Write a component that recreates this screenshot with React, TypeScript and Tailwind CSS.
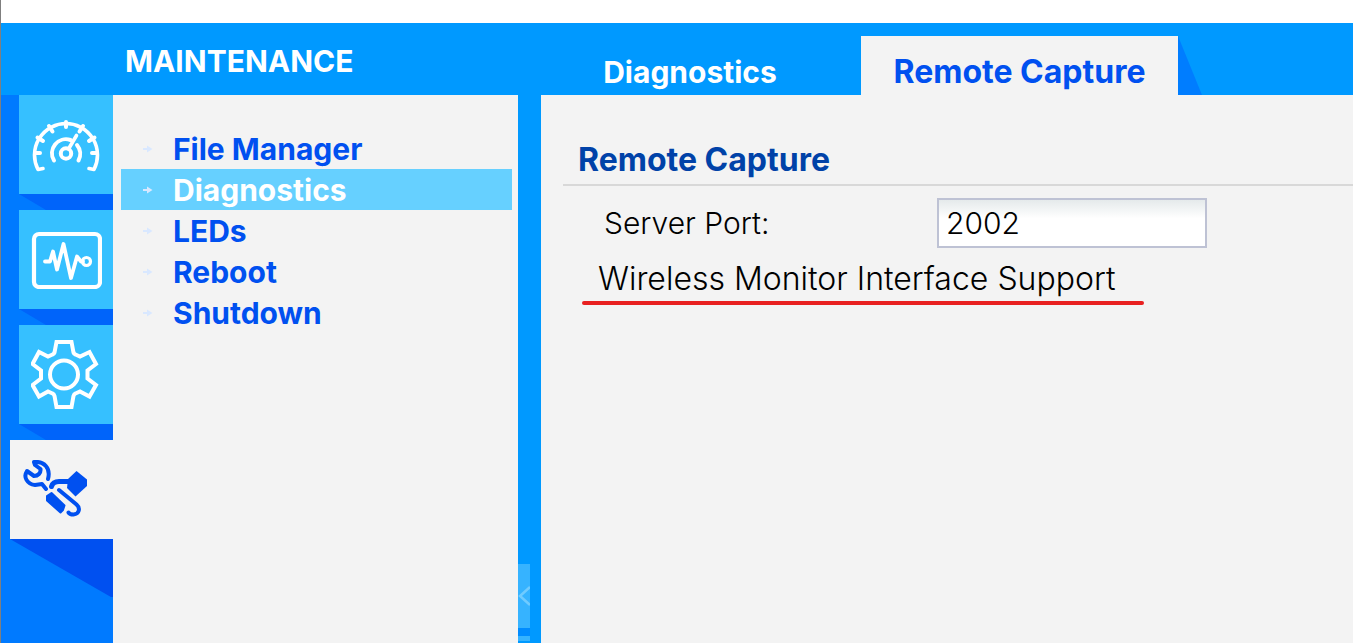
import { useState } from 'react'
import type { ReactNode } from 'react'

const MENU = ['File Manager', 'Diagnostics', 'LEDs', 'Reboot', 'Shutdown']

function GaugeIcon() {
  return (
    <svg viewBox="0 0 70 54" className="w-[70px] h-[54px]" fill="none" stroke="white" strokeLinecap="round" strokeLinejoin="round">
      <path d="M12 50.500L7 51.500A31.500 31.500 0 1 1 63 51.500L58 50.500" strokeWidth="3.600" />
      <path d="M35 4V9M18 8L21.500 13.500M52 8L48.500 13.500M6.500 19.500L12 23M63.500 19.500L58 23M4 35H9M66 35H61" strokeWidth="4" />
      <path d="M23 42.500A14 14 0 0 1 39.500 22M46 27A14 14 0 0 1 47.500 42.500" strokeWidth="4" />
      <circle cx="35" cy="35.500" r="5.200" strokeWidth="4" />
      <path d="M37.500 31L45.500 17.500" strokeWidth="3.600" />
    </svg>
  )
}

function MonitorIcon() {
  return (
    <svg viewBox="-1 0 72 58" className="w-[72px] h-[58px]" fill="none" stroke="white" strokeLinecap="round" strokeLinejoin="round">
      <rect x="3" y="3" width="66" height="53" rx="5" strokeWidth="4.200" />
      <path d="M14 30.500H19L22 20.500L26 38.500L32.500 13L40 47L46 25.500L50 30.500H52" strokeWidth="3.800" />
      <circle cx="55.500" cy="30.500" r="4" strokeWidth="3.200" />
    </svg>
  )
}

function GearIcon() {
  return (
    <svg viewBox="2 1 70 70" className="w-[70px] h-[70px]" fill="none" stroke="white" strokeWidth="4" strokeLinejoin="miter">
      <path d="M27.500 3H42.500L44.500 13.500Q45 15 46.500 15.500L51 17.500L60.500 13L67 25L58.500 31.500V39.500L67 46L60.500 57.500L51 52.500L46.500 54.500Q45 55 44.500 57L42.500 68H27.500L25.500 57Q25 55 23.500 54.500L19 52.500L10 57.500L3.500 46L12 39.500V31.500L3.500 25L10 13L19 17.500L23.500 15.500Q25 15 25.500 13.500Z" />
      <circle cx="35" cy="35.500" r="14" />
    </svg>
  )
}

function ToolsIcon() {
  return (
    <svg viewBox="0 0 66 60" className="w-[66px] h-[60px]" fill="none" stroke="#0050f0" strokeLinecap="round" strokeLinejoin="round">
      <path d="M26 19C29 8 22 1 12 2L13 5L18.500 9C19 13 16 16 12 16L5 11C1 17 5 24 13 25L20 24L24 29" strokeWidth="4" />
      <path d="M29.500 26.500C30.500 23 33 21.500 37 21.500H48" strokeWidth="5" />
      <path d="M46 19L54.500 11L65 19.500V26L53.500 36.500L45 28Z" fill="#0050f0" stroke="none" />
      <path d="M25 36L29.500 33L42.500 45.500L41 50L38.500 52.500L25 40.500Z" fill="#0050f0" strokeWidth="2" />
      <path d="M37 30L54.500 44.500C58.500 48 57.500 54 51.500 54.500C49 54.500 47 53.500 46.500 52.500" strokeWidth="4" />
    </svg>
  )
}

function ArrowIcon() {
  return (
    <svg viewBox="0 0 10 8" className="w-[10px] h-2" fill="#d9e8ff">
      <path d="M0 3H4V0.500L9.500 4L4 7.500V5H0Z" />
    </svg>
  )
}

function RailButton({ label, children }: { label: string; children: ReactNode }) {
  return (
    <div className="pl-[18px]">
      <button aria-label={label} className="w-full h-[99px] bg-[#36c0ff] flex items-center justify-center">
        {children}
      </button>
      {/* long shadow under the tile */}
      <div className="h-4 bg-[#0064fa] [clip-path:polygon(0_0,100%_0,100%_100%,27px_100%)]" />
    </div>
  )
}

export default function App() {
  const [active, setActive] = useState('Diagnostics')
  const [port, setPort] = useState('2002')

  return (
    <div className="min-h-screen flex flex-col bg-[#0099ff] border-l border-[#7f7f7f] font-['Inter',sans-serif] text-[30px] leading-[40px]">
      <div className="h-[23px] bg-white" />

      <header className="h-[72px] flex text-white font-bold">
        <h1 className="w-[540px] shrink-0 pl-[124px] pt-[18px]">MAINTENANCE</h1>
        <nav className="flex items-end gap-[49px] pl-[27px] whitespace-nowrap">
          <a href="#diagnostics" className="w-[244px] h-[59px] pt-4 text-center">Diagnostics</a>
          <a href="#capture" className="w-[317px] h-[59px] pt-4 text-center bg-[#f3f3f3] text-[#0050f0] text-[32px]">Remote Capture</a>
        </nav>
        <div className="self-end w-6 h-[59px] bg-[#007dff] [clip-path:polygon(0_0,100%_100%,0_100%)]" />
      </header>

      <div className="flex flex-1">
        <aside className="w-28 shrink-0 bg-[#007aff]">
          <RailButton label="Dashboard"><GaugeIcon /></RailButton>
          <RailButton label="Monitor"><MonitorIcon /></RailButton>
          <RailButton label="Configuration"><GearIcon /></RailButton>
          <div className="pl-[9px]">
            <button aria-label="Maintenance" className="w-full h-[99px] pl-3 bg-[#f3f3f3] flex items-center">
              <ToolsIcon />
            </button>
            <div className="h-[58px] bg-[#0050f0] [clip-path:polygon(0_0,100%_0,100%_100%,98%_100%)]" />
          </div>
        </aside>

        <nav className="w-[405px] shrink-0 bg-[#f3f3f3] pt-[33px] pl-2 pr-[6px] font-bold">
          {MENU.map((item) => (
            <button
              key={item}
              onClick={() => setActive(item)}
              className={`w-full h-[41px] pl-[22px] flex items-center gap-5 ${
                item === active ? 'bg-[#66d0ff] text-white' : 'text-[#0050f0]'
              }`}
            >
              <ArrowIcon />
              {item}
            </button>
          ))}
        </nav>

        {/* Collapse handle */}
        <div className="w-[23px] shrink-0 flex flex-col justify-end pb-[2px]">
          <button aria-label="Collapse menu" className="w-3 h-16 bg-[#36b3ff] flex items-center">
            <svg viewBox="0 0 12 20" className="w-3 h-5" fill="none" stroke="#70cbff" strokeWidth="2.500">
              <path d="M12 1L2 10L12 19" />
            </svg>
          </button>
          <div className="w-3 h-2 bg-[#008cff]" />
          <div className="w-3 h-[5px] bg-[#36b3ff]" />
        </div>

        <main className="flex-1 bg-[#f3f3f3] pt-[45px] pl-[22px]">
          <h2 className="h-[46px] pl-[15px] border-b-2 border-[#d8d8d8] text-[32px] font-bold text-[#0042a8]">Remote Capture</h2>
          <div className="flex items-center pt-3 pl-[41px] font-light">
            <label htmlFor="port" className="w-[333px]">Server Port:</label>
            <input
              id="port"
              value={port}
              onChange={(e) => setPort(e.target.value)}
              className="w-[270px] h-[50px] px-[7px] border-2 border-[#bec2d4] bg-linear-to-b from-[#e5eaeb] to-white to-40% outline-none"
            />
          </div>
          <p className="pt-[11px] pl-[35px] text-[32px] font-light">Wireless Monitor Interface Support</p>
          <div className="ml-[19px] w-[562px] h-1 mt-[2px] rounded-full bg-[#e82020]" />
        </main>
      </div>
    </div>
  )
}
